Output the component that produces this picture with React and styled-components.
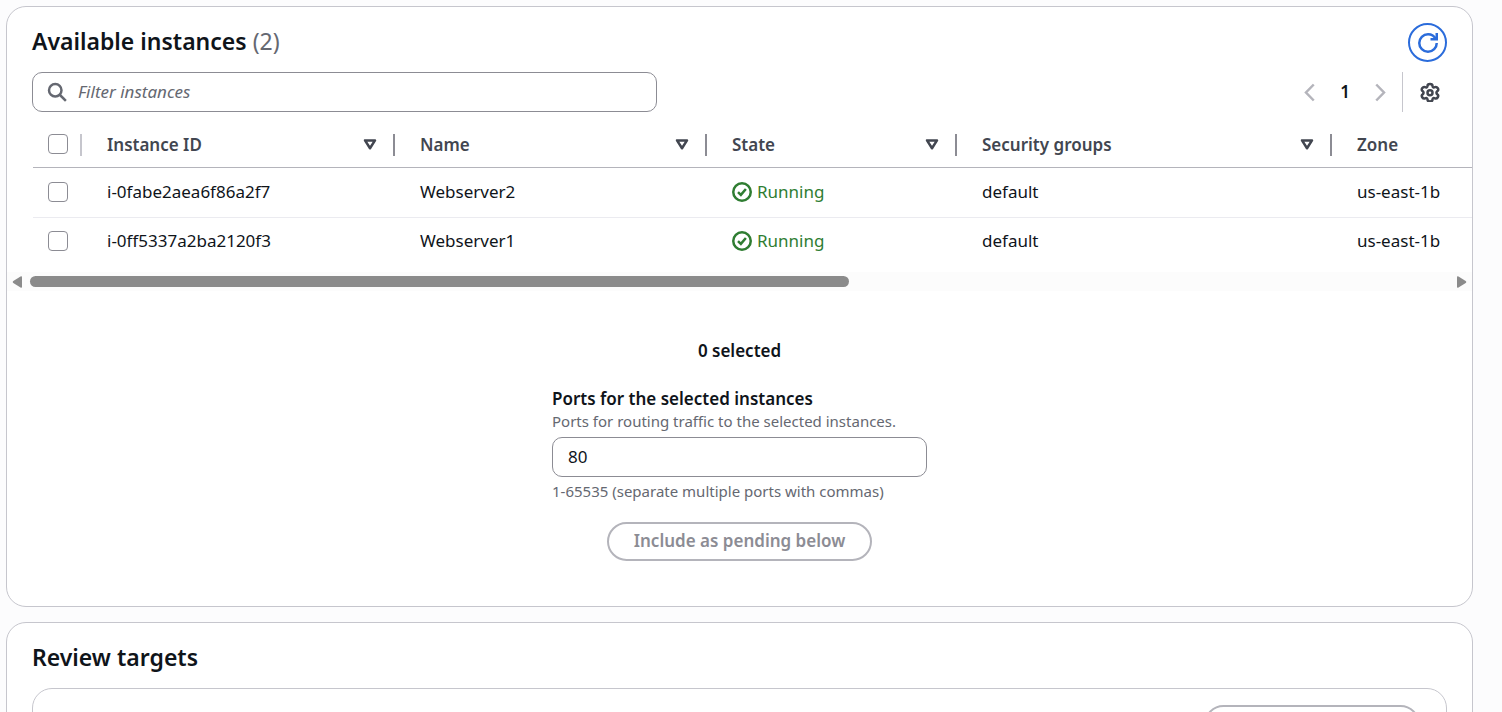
import React from "react";
import styled, { createGlobalStyle } from "styled-components";

const GlobalStyle = createGlobalStyle`
  *, *::before, *::after { box-sizing: border-box; }
  body {
    margin: 0;
    background: #fcfcfd;
    color: #0f141a;
    font-family: "Noto Sans", "Open Sans", sans-serif;
    font-size: 17px;
    line-height: 24px;
    overflow: hidden;
  }
  input, button { font: inherit; color: inherit; }
`;

const Page = styled.main`
  display: flex;
  flex-direction: column;
  gap: 15px;
  height: 100vh;
  overflow: hidden;
  padding: 6px 29px 0 6px;
`;

const Card = styled.section`
  flex: none;
  background: #ffffff;
  border: 1px solid #c6c6cd;
  border-radius: 20px;
  overflow: hidden;
`;

const CardHeader = styled.header`
  display: flex;
  align-items: flex-start;
  justify-content: space-between;
  padding: 16px 25px 0;
`;

const Title = styled.h2`
  margin: 0 0 2px;
  font-size: 23px;
  line-height: 36px;
  font-weight: 650;
`;

const Counter = styled.span`
  color: #656871;
  font-weight: 400;
`;

const RoundButton = styled.button`
  display: grid;
  place-items: center;
  width: 39px;
  height: 39px;
  padding: 0;
  border: 2px solid #2b6cdb;
  border-radius: 50%;
  background: #ffffff;
  color: #2b6cdb;
`;

const Tools = styled.div`
  display: flex;
  align-items: center;
  justify-content: space-between;
  padding: 10px 25px 0;
`;

const SearchBox = styled.label`
  display: flex;
  align-items: center;
  gap: 11px;
  width: 625px;
  height: 40px;
  padding: 0 14px;
  border: 1px solid #8c8c94;
  border-radius: 10px;
  color: #656871;
`;

const SearchInput = styled.input`
  flex: 1;
  min-width: 0;
  padding: 0;
  border: 0;
  outline: 0;
  background: transparent;
  &::placeholder { color: #656871; font-style: italic; opacity: 1; }
`;

const Pager = styled.nav`
  display: flex;
  align-items: center;
`;

const IconButton = styled.button`
  display: grid;
  place-items: center;
  width: 20px;
  height: 20px;
  padding: 0;
  border: 0;
  background: transparent;
  color: ${(p) => (p.$muted ? "#b4b4bb" : "#424650")};
`;

const PageNumber = styled.button`
  width: 50px;
  padding: 0;
  border: 0;
  background: transparent;
  font-weight: 650;
`;

const Preferences = styled.div`
  display: flex;
  align-items: center;
  height: 40px;
  margin-left: 12px;
  padding: 0 7px 0 17px;
  border-left: 1px solid #c6c6cd;
`;

const TableScroll = styled.div`
  overflow: hidden;
  margin-top: 10px;
  padding-left: 26px;
`;

const Table = styled.table`
  width: 2500px;
  table-layout: fixed;
  border-collapse: separate;
  border-spacing: 0;
`;

const Col = styled.col`
  width: ${(p) => p.$width};
`;

const Th = styled.th`
  height: 46px;
  padding: 0;
  border-bottom: 1px solid #b4b4bb;
  color: #424650;
  font-weight: 600;
  text-align: left;
`;

const HeadCell = styled.div`
  display: flex;
  align-items: center;
  justify-content: space-between;
  height: 22px;
  padding: ${(p) => (p.$select ? "0 12px 2px 15px" : "0 13px 0 25px")};
  border-right: 2px solid ${(p) => (p.$select ? "#c6c6cd" : "#8c8c94")};
`;

const Td = styled.td`
  height: ${(p) => (p.$last ? "47px" : "50px")};
  padding: 0 0 2px ${(p) => (p.$select ? "15px" : "25px")};
  border-bottom: ${(p) => (p.$last ? "0" : "1px solid #ebebf0")};
`;

const Checkbox = styled.input`
  appearance: none;
  display: block;
  flex: none;
  width: 20px;
  height: 20px;
  margin: 0;
  border: 1px solid #8c8c94;
  border-radius: 4px;
  background: #ffffff;
`;

const Status = styled.span`
  display: flex;
  align-items: center;
  gap: 5px;
  color: #2f7d32;
`;

const ScrollBar = styled.div`
  display: flex;
  align-items: center;
  gap: 8px;
  height: 19px;
  margin-top: 7px;
  padding: 0 5px;
  background: #fcfcfc;
  color: #8b8b8b;
`;

const ScrollTrack = styled.div`
  flex: 1;
`;

const ScrollThumb = styled.div`
  width: 57.7%;
  height: 11px;
  border-radius: 6px;
  background: #8b8b8b;
`;

const PendingForm = styled.form`
  display: flex;
  flex-direction: column;
  align-items: center;
  padding: 48px 25px 45px;
`;

const Selected = styled.strong`
  font-weight: 600;
`;

const Field = styled.div`
  display: flex;
  flex-direction: column;
  width: 375px;
  margin: 24px 0 21px;
`;

const FieldLabel = styled.label`
  font-weight: 600;
`;

const Hint = styled.span`
  color: #656871;
  font-size: 15px;
  line-height: 20px;
`;

const PortInput = styled.input`
  height: 40px;
  margin: 6px 0 4px;
  padding: 0 15px 2px;
  border: 1px solid #8c8c94;
  border-radius: 10px;
  background: #ffffff;
`;

const PillButton = styled.button`
  height: 39px;
  min-width: 216px;
  padding: 0 25px 2px;
  border: 2px solid #b4b4bb;
  border-radius: 20px;
  background: #ffffff;
  color: #8c8c94;
  font-weight: 600;
`;

const ReviewPanel = styled.div`
  display: flex;
  justify-content: flex-end;
  height: 200px;
  margin: 11px 25px 25px;
  padding: 16px 26px;
  border: 1px solid #c6c6cd;
  border-radius: 20px;
`;

const Icon = ({ size = 20, width = 2, children }) => (
  <svg width={size} height={size} viewBox="0 0 16 16" fill="none" stroke="currentColor" strokeWidth={width} aria-hidden="true">
    {children}
  </svg>
);

const SearchIcon = () => (
  <Icon>
    <circle cx="6.6" cy="6.6" r="5" />
    <path d="M10.2 10.2l4.9 4.9" />
  </Icon>
);
const RefreshIcon = () => (
  <Icon>
    <path d="M10 5h5V0" />
    <path d="M15 8c0 3.87-3.13 7-7 7s-7-3.13-7-7 3.13-7 7-7c2.79 0 5.2 1.63 6.33 4" />
  </Icon>
);
const LeftIcon = () => (
  <Icon><path d="M11 2L4.8 8.4l6.2 6.4" /></Icon>
);
const RightIcon = () => (
  <Icon><path d="M5 2l6.2 6.4L5 14.8" /></Icon>
);
const GearIcon = () => (
  <Icon>
    <circle cx="8" cy="8.6" r="2" />
    <path transform="translate(0 .6)" strokeLinejoin="round" d="M6 2.6C6 0.5 10 0.5 10 2.6C10.1 3.7 10.9 4 11.9 3.5C13.7 2.7 15.7 5.7 13.9 6.7C12.9 7.4 12.9 8.6 13.9 9.3C15.7 10.3 13.7 13.3 11.9 12.5C10.9 12 10.1 12.3 10 13.4C10 15.5 6 15.5 6 13.4C5.9 12.3 5.1 12 4.1 12.5C2.3 13.3 0.3 10.3 2.1 9.3C3.1 8.6 3.1 7.4 2.1 6.7C0.3 5.7 2.3 2.7 4.1 3.5C5.1 4 5.9 3.7 6 2.6Z" />
  </Icon>
);
const SortIcon = () => (
  <Icon><path strokeLinejoin="round" d="M4 4.3h8L8 10.6z" /></Icon>
);
const CheckIcon = () => (
  <Icon>
    <circle cx="8" cy="8" r="7" />
    <path d="M4.8 8.1l2.3 2.2 4-4.7" />
  </Icon>
);
const ArrowIcon = ({ right }) => (
  <svg width="10" height="12" viewBox="0 0 10 12" fill="currentColor" aria-hidden="true">
    <path d={right ? "M0 1.2Q0 -0.4 1.5 0.5L8.7 5Q9.8 6 8.7 7L1.5 11.5Q0 12.4 0 10.8Z" : "M10 1.2Q10 -0.4 8.5 0.5L1.3 5Q0.2 6 1.3 7L8.5 11.5Q10 12.4 10 10.8Z"} />
  </svg>
);

const columns = [
  { label: "Instance ID", width: "313px" },
  { label: "Name", width: "312px" },
  { label: "State", width: "250px" },
  { label: "Security groups", width: "375px" },
  { label: "Zone", width: "auto" },
];

const instances = [
  { id: "i-0fabe2aea6f86a2f7", name: "Webserver2", state: "Running", group: "default", zone: "us-east-1b" },
  { id: "i-0ff5337a2ba2120f3", name: "Webserver1", state: "Running", group: "default", zone: "us-east-1b" },
];

function InstancesTable() {
  return (
    <TableScroll>
      <Table>
        <colgroup>
          <Col $width="49px" />
          {columns.map((c) => <Col key={c.label} $width={c.width} />)}
        </colgroup>
        <thead>
          <tr>
            <Th scope="col">
              <HeadCell $select><Checkbox type="checkbox" aria-label="Select all instances" /></HeadCell>
            </Th>
            {columns.map((c) => (
              <Th key={c.label} scope="col">
                <HeadCell>
                  {c.label}
                  <IconButton type="button" aria-label={`Sort by ${c.label}`}><SortIcon /></IconButton>
                </HeadCell>
              </Th>
            ))}
          </tr>
        </thead>
        <tbody>
          {instances.map((row, i) => {
            const last = i === instances.length - 1;
            return (
              <tr key={row.id}>
                <Td $select $last={last}><Checkbox type="checkbox" aria-label={`Select ${row.id}`} /></Td>
                <Td $last={last}>{row.id}</Td>
                <Td $last={last}>{row.name}</Td>
                <Td $last={last}><Status><CheckIcon />{row.state}</Status></Td>
                <Td $last={last}>{row.group}</Td>
                <Td $last={last}>{row.zone}</Td>
              </tr>
            );
          })}
        </tbody>
      </Table>
    </TableScroll>
  );
}

export default function App() {
  return (
    <>
      <GlobalStyle />
      <Page>
        <Card>
          <CardHeader>
            <Title>Available instances <Counter>(2)</Counter></Title>
            <RoundButton type="button" aria-label="Refresh"><RefreshIcon /></RoundButton>
          </CardHeader>
          <Tools>
            <SearchBox>
              <SearchIcon />
              <SearchInput type="text" placeholder="Filter instances" aria-label="Filter instances" />
            </SearchBox>
            <Pager aria-label="Pagination">
              <IconButton type="button" $muted aria-label="Previous page"><LeftIcon /></IconButton>
              <PageNumber type="button">1</PageNumber>
              <IconButton type="button" $muted aria-label="Next page"><RightIcon /></IconButton>
              <Preferences>
                <IconButton type="button" aria-label="Preferences"><GearIcon /></IconButton>
              </Preferences>
            </Pager>
          </Tools>
          <InstancesTable />
          <ScrollBar aria-hidden="true">
            <ArrowIcon />
            <ScrollTrack><ScrollThumb /></ScrollTrack>
            <ArrowIcon right />
          </ScrollBar>
          <PendingForm>
            <Selected>0 selected</Selected>
            <Field>
              <FieldLabel htmlFor="ports">Ports for the selected instances</FieldLabel>
              <Hint>Ports for routing traffic to the selected instances.</Hint>
              <PortInput id="ports" type="text" defaultValue="80" />
              <Hint>1-65535 (separate multiple ports with commas)</Hint>
            </Field>
            <PillButton type="button" disabled>Include as pending below</PillButton>
          </PendingForm>
        </Card>
        <Card>
          <CardHeader><Title>Review targets</Title></CardHeader>
          <ReviewPanel>
            <PillButton type="button" disabled aria-label="Remove all pending" />
          </ReviewPanel>
        </Card>
      </Page>
    </>
  );
}
